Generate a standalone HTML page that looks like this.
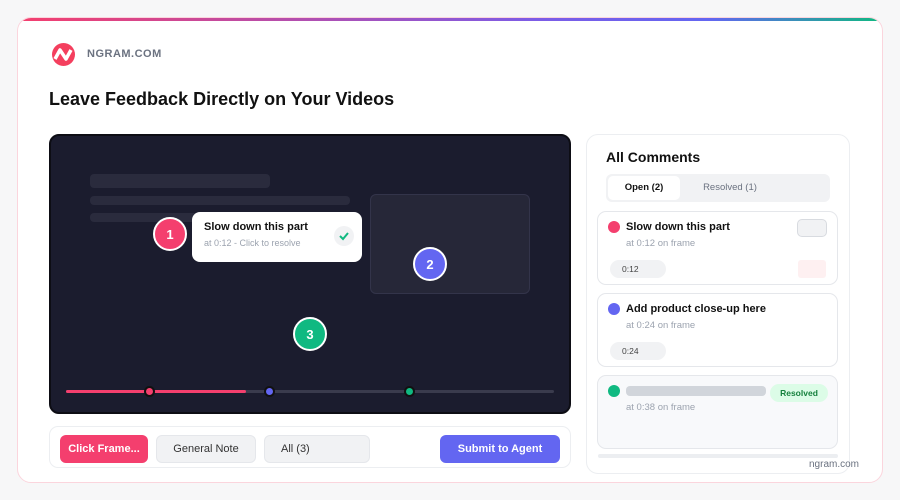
<!DOCTYPE html>
<html><head><style>
*{box-sizing:border-box;margin:0;padding:0}
body{width:900px;height:500px;background:#f7f7f8;font-family:"Liberation Sans",sans-serif;position:relative;overflow:hidden}
.a{position:absolute}
.card{left:17px;top:17px;width:866px;height:466px;background:#fff;border:1px solid #fbd5dd;border-radius:14px;overflow:hidden}
.grad{left:0;top:0;width:100%;height:3px;background:linear-gradient(90deg,#f43f6e,#7c5ce6 60%,#6366f1 80%,#10b981)}
.pin{width:34px;height:34px;border-radius:50%;border:2px solid #fff;color:#fff;font-weight:bold;font-size:13px;display:flex;align-items:center;justify-content:center}
.bar{background:#2a2b3d;border-radius:4px}
.cc{border:1px solid #e5e7eb;border-radius:9px;background:#fff}
.dot{width:12px;height:12px;border-radius:50%}
.t{font-size:11px;font-weight:bold;color:#111}
.s{font-size:9.5px;color:#9ca3af}
.chip{background:#f1f2f4;border-radius:9px;font-size:8.5px;color:#444;padding-left:12px;line-height:18px;height:18px;width:56px}
.btn{height:28px;border-radius:6px;font-size:11px;display:flex;align-items:center;justify-content:center}
</style></head><body>
<div class="a card">
<div class="a grad"></div>
</div>
<svg class="a" style="left:51px;top:42px" width="25" height="25" viewBox="0 0 25 25"><circle cx="12.5" cy="12.5" r="11.5" fill="#f43f5e"/><path d="M4 17 L9 8 L15 17 L20 8" stroke="#fff" stroke-width="3.5" fill="none" stroke-linejoin="round"/></svg>
<div class="a" style="left:87px;top:48px;font-size:11px;font-weight:bold;color:#6b7280;letter-spacing:.5px">NGRAM.COM</div>
<div class="a" style="left:49px;top:89px;font-size:18px;font-weight:bold;color:#111">Leave Feedback Directly on Your Videos</div>

<div class="a" style="left:49px;top:134px;width:522px;height:280px;background:#1b1c2e;border:2px solid #0d0d14;border-radius:10px"></div>
<div class="a bar" style="left:90px;top:174px;width:180px;height:14px"></div>
<div class="a bar" style="left:90px;top:196px;width:260px;height:9px"></div>
<div class="a bar" style="left:90px;top:213px;width:150px;height:9px"></div>
<div class="a" style="left:370px;top:194px;width:160px;height:100px;background:#262738;border:1px solid #33344a;border-radius:6px"></div>
<div class="a pin" style="left:153px;top:217px;background:#f43f6e">1</div>
<div class="a" style="left:192px;top:212px;width:170px;height:50px;background:#fff;border-radius:8px"></div>
<div class="a" style="left:204px;top:221px;font-size:11px;font-weight:bold;color:#111">Slow down this part</div>
<div class="a" style="left:204px;top:238px;font-size:9px;color:#9ca3af">at 0:12 - Click to resolve</div>
<div class="a" style="left:334px;top:226px;width:20px;height:20px;border-radius:50%;background:#f1f2f4"></div>
<svg class="a" style="left:337px;top:229px" width="14" height="14"><path d="M3 7 L6 10 L11 4" stroke="#10b981" stroke-width="2" fill="none"/></svg>
<div class="a pin" style="left:413px;top:247px;background:#6366f1">2</div>
<div class="a pin" style="left:293px;top:317px;background:#10b981">3</div>
<div class="a" style="left:66px;top:390px;width:488px;height:3px;background:#3a3b4d;border-radius:2px"></div>
<div class="a" style="left:66px;top:390px;width:180px;height:3px;background:#f43f6e;border-radius:2px"></div>
<div class="a dot" style="left:144px;top:386px;background:#f43f6e;border:2px solid #111;width:11px;height:11px"></div>
<div class="a dot" style="left:264px;top:386px;background:#6366f1;border:2px solid #111;width:11px;height:11px"></div>
<div class="a dot" style="left:404px;top:386px;background:#10b981;border:2px solid #111;width:11px;height:11px"></div>

<div class="a" style="left:49px;top:426px;width:522px;height:42px;border:1px solid #eceef1;border-radius:9px"></div>
<div class="a btn" style="left:60px;top:435px;width:88px;background:#f43f6e;color:#fff;font-weight:bold">Click Frame...</div>
<div class="a btn" style="left:156px;top:435px;width:100px;background:#f1f2f4;border:1px solid #e5e7eb;color:#333">General Note</div>
<div class="a btn" style="left:264px;top:435px;width:106px;background:#f1f2f4;border:1px solid #e5e7eb;color:#333;justify-content:flex-start;padding-left:16px">All (3)</div>
<div class="a btn" style="left:440px;top:435px;width:120px;background:#6366f1;color:#fff;font-weight:bold">Submit to Agent</div>

<div class="a" style="left:586px;top:134px;width:264px;height:340px;border:1px solid #eceef1;border-radius:12px;background:#fff"></div>
<div class="a" style="left:606px;top:149px;font-size:14px;font-weight:bold;color:#111">All Comments</div>
<div class="a" style="left:606px;top:174px;width:224px;height:28px;background:#f1f2f4;border-radius:6px"></div>
<div class="a" style="left:608px;top:176px;width:72px;height:24px;background:#fff;border-radius:5px;font-size:9.5px;font-weight:bold;color:#111;text-align:center;line-height:24px">Open (2)</div>
<div class="a" style="left:690px;top:176px;width:80px;height:24px;font-size:9.5px;color:#6b7280;text-align:center;line-height:24px">Resolved (1)</div>

<div class="a cc" style="left:597px;top:211px;width:241px;height:74px"></div>
<div class="a dot" style="left:608px;top:221px;background:#f43f6e"></div>
<div class="a t" style="left:626px;top:221px">Slow down this part</div>
<div class="a s" style="left:626px;top:238px">at 0:12 on frame</div>
<div class="a" style="left:797px;top:219px;width:30px;height:18px;background:#f1f2f4;border:1px solid #d8dbe0;border-radius:5px"></div>
<div class="a chip" style="left:610px;top:260px">0:12</div>
<div class="a" style="left:798px;top:260px;width:28px;height:18px;background:#fef0f1;border-radius:3px"></div>

<div class="a cc" style="left:597px;top:293px;width:241px;height:74px"></div>
<div class="a dot" style="left:608px;top:303px;background:#6366f1"></div>
<div class="a t" style="left:626px;top:303px">Add product close-up here</div>
<div class="a s" style="left:626px;top:320px">at 0:24 on frame</div>
<div class="a chip" style="left:610px;top:342px">0:24</div>

<div class="a cc" style="left:597px;top:375px;width:241px;height:74px;background:#f8f9fb"></div>
<div class="a dot" style="left:608px;top:385px;background:#10b981"></div>
<div class="a" style="left:626px;top:386px;width:140px;height:10px;background:#d1d5db;border-radius:4px"></div>
<div class="a" style="left:770px;top:384px;width:58px;height:18px;background:#dcfce7;border-radius:9px;font-size:8.5px;font-weight:bold;color:#15803d;text-align:center;line-height:18px">Resolved</div>
<div class="a s" style="left:626px;top:402px">at 0:38 on frame</div>
<div class="a" style="left:598px;top:454px;width:240px;height:4px;background:#eceef1;border-radius:2px"></div>
<div class="a" style="left:809px;top:459px;font-size:10px;color:#6b7280">ngram.com</div>
</body></html>
